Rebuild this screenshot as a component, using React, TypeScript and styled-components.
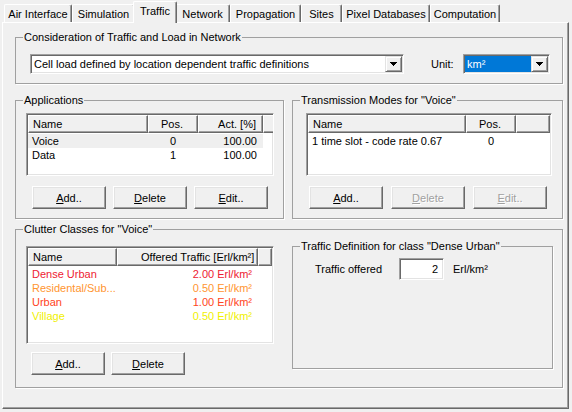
import * as React from 'react';
import styled, { createGlobalStyle } from 'styled-components';

const GlobalStyle = createGlobalStyle`
  html, body {
    margin: 0;
    padding: 0;
    background: #f0f0f0;
  }
  body {
    font-family: "Liberation Sans", Arial, sans-serif;
    font-size: 11px;
    color: #000;
  }
`;

const Window = styled.div`
  width: 572px;
  height: 412px;
  overflow: hidden;
  background: #f0f0f0;
`;

const TabStrip = styled.div`
  display: flex;
  align-items: flex-end;
  box-sizing: border-box;
  height: 22px;
  padding-left: 4px;
`;

const Tab = styled.div<{ $active?: boolean; $w: number }>`
  position: relative;
  z-index: ${(p) => (p.$active ? 2 : 1)};
  box-sizing: border-box;
  width: ${(p) => p.$w + (p.$active ? 4 : 0)}px;
  height: ${(p) => (p.$active ? 22 : 18)}px;
  margin: 0 ${(p) => (p.$active ? -2 : 0)}px ${(p) => (p.$active ? -1 : 0)}px;
  padding-bottom: ${(p) => (p.$active ? 3 : 0)}px;
  display: flex;
  align-items: center;
  justify-content: center;
  white-space: nowrap;
  background: #f0f0f0;
  border-top: 1px solid #fff;
  border-left: 1px solid #fff;
  border-right: 1px solid #696969;
  border-radius: 2px 2px 0 0;
  box-shadow: inset -1px 0 0 #a0a0a0;
`;

const Panel = styled.div`
  box-sizing: border-box;
  width: 567px;
  height: 387px;
  margin-left: 2px;
  padding: 8px 0 0 12px;
  display: flex;
  flex-direction: column;
  border-top: 1px solid #fff;
  border-left: 1px solid #fff;
  border-right: 1px solid #696969;
  border-bottom: 1px solid #696969;
  box-shadow: inset -1px -1px 0 #a0a0a0;
`;

const Group = styled.fieldset<{ $w: number; $h: number }>`
  box-sizing: border-box;
  width: ${(p) => p.$w}px;
  height: ${(p) => p.$h}px;
  min-width: 0;
  margin: 0;
  padding: 0;
  border: 1px solid #a0a0a0;
  box-shadow: 1px 1px 0 #fff;
`;

const Legend = styled.legend`
  margin-left: 7px;
  padding: 0 1px;
  line-height: 13px;
  white-space: nowrap;
`;

const LoadRow = styled.div`
  display: flex;
  align-items: center;
  margin-top: 10px;
  padding-left: 14px;
`;

const UnitLabel = styled.span`
  width: 32px;
  margin-left: 27px;
`;

const Sunken = styled.div`
  box-sizing: border-box;
  background: #fff;
  border-top: 1px solid #a0a0a0;
  border-left: 1px solid #a0a0a0;
  border-right: 1px solid #fff;
  border-bottom: 1px solid #fff;
  box-shadow: inset 1px 1px 0 #696969, inset -1px -1px 0 #e3e3e3;
  padding: 1px;
`;

const Combo = styled(Sunken)<{ $w: number }>`
  width: ${(p) => p.$w}px;
  height: 20px;
  display: flex;
`;

const ComboText = styled.div<{ $selected?: boolean }>`
  flex: 1;
  min-width: 0;
  padding-left: 2px;
  line-height: 16px;
  white-space: nowrap;
  overflow: hidden;
  background: ${(p) => (p.$selected ? '#0078d7' : 'transparent')};
  color: ${(p) => (p.$selected ? '#fff' : '#000')};
`;

const DropButton = styled.div`
  box-sizing: border-box;
  width: 17px;
  height: 16px;
  display: flex;
  align-items: center;
  justify-content: center;
  background: #f0f0f0;
  border-top: 1px solid #e3e3e3;
  border-left: 1px solid #e3e3e3;
  border-right: 1px solid #696969;
  border-bottom: 1px solid #696969;
  box-shadow: inset 1px 1px 0 #fff, inset -1px -1px 0 #a0a0a0;
`;

const MiddleRow = styled.div`
  display: flex;
  gap: 8px;
  margin-top: 10px;
`;

const ListFrame = styled(Sunken)<{ $w: number; $h: number }>`
  width: ${(p) => p.$w}px;
  height: ${(p) => p.$h}px;
  overflow: hidden;
`;

const ListHeader = styled.div<{ $cols: string }>`
  display: grid;
  grid-template-columns: ${(p) => p.$cols} 1fr;
  height: 18px;
`;

const HeadCell = styled.div<{ $align: string; $pad?: number }>`
  box-sizing: border-box;
  height: 18px;
  line-height: 16px;
  padding: 0 6px 0 ${(p) => (p.$pad !== undefined ? p.$pad : 4)}px;
  text-align: ${(p) => p.$align};
  white-space: nowrap;
  overflow: hidden;
  background: #f0f0f0;
  border-top: 1px solid #fff;
  border-left: 1px solid #fff;
  border-right: 1px solid #696969;
  border-bottom: 1px solid #696969;
  box-shadow: inset -1px -1px 0 #a0a0a0;
`;

const ListBody = styled.div`
  padding-top: 1px;
`;

const ListRow = styled.div<{ $cols: string; $hl?: boolean; $color?: string }>`
  display: grid;
  grid-template-columns: ${(p) => p.$cols};
  width: max-content;
  height: 14px;
  line-height: 14px;
  background: ${(p) => (p.$hl ? '#efefef' : 'transparent')};
  color: ${(p) => p.$color || '#000'};
`;

const Cell = styled.div<{ $align: string }>`
  padding: ${(p) =>
    p.$align === 'left' ? '0 0 0 4px' : p.$align === 'right' ? '0 6px 0 0' : '0'};
  text-align: ${(p) => p.$align};
  white-space: nowrap;
  overflow: hidden;
`;

const ListArea = styled.div<{ $left: number }>`
  margin: 6px 0 0 ${(p) => p.$left}px;
`;

const ButtonRow = styled.div<{ $top: number; $left: number; $gap: number }>`
  display: flex;
  gap: ${(p) => p.$gap}px;
  margin: ${(p) => p.$top}px 0 0 ${(p) => p.$left}px;
`;

const Button = styled.button`
  box-sizing: border-box;
  width: 74px;
  height: 23px;
  padding: 0;
  font: inherit;
  color: #000;
  background: #f0f0f0;
  border-style: solid;
  border-width: 1px;
  border-color: #fff #696969 #696969 #fff;
  box-shadow: inset -1px -1px 0 #a0a0a0, inset 1px 1px 0 #e3e3e3;

  &:disabled {
    color: #a0a0a0;
    text-shadow: 1px 1px 0 #fff;
  }
`;

const ClutterBody = styled.div`
  display: flex;
  align-items: flex-start;
  margin-top: 4px;
`;

const ClutterList = styled.div`
  margin: 6px 0 0 10px;
`;

const DefGroup = styled(Group)`
  margin-left: 18px;
`;

const DefRow = styled.div`
  display: flex;
  align-items: center;
  margin-top: 5px;
  padding-left: 22px;
`;

const DefLabel = styled.span`
  width: 84px;
`;

const NumberBox = styled(Sunken)`
  width: 45px;
  height: 22px;
  padding-right: 5px;
  line-height: 18px;
  text-align: right;
`;

const UnitText = styled.span`
  margin-left: 9px;
`;

type Col = { title: string; w: number; align: 'left' | 'center' | 'right'; headAlign?: string; headPad?: number };
type Row = { cells: string[]; hl?: boolean; color?: string };

const Arrow = () => (
  <svg width="7" height="4" viewBox="0 0 7 4" shapeRendering="crispEdges">
    <polygon points="0,0 7,0 3.5,4" fill="#000" />
  </svg>
);

const ListTable = ({ cols, rows, w, h }: { cols: Col[]; rows: Row[]; w: number; h: number }) => {
  const template = cols.map((c) => `${c.w}px`).join(' ');
  return (
    <ListFrame $w={w} $h={h}>
      <ListHeader $cols={template}>
        {cols.map((c) => (
          <HeadCell key={c.title} $align={c.headAlign || c.align} $pad={c.headPad}>
            {c.title}
          </HeadCell>
        ))}
        <HeadCell $align="left" />
      </ListHeader>
      <ListBody>
        {rows.map((r, i) => (
          <ListRow key={i} $cols={template} $hl={r.hl} $color={r.color}>
            {r.cells.map((c, j) => (
              <Cell key={j} $align={cols[j].align}>
                {c}
              </Cell>
            ))}
          </ListRow>
        ))}
      </ListBody>
    </ListFrame>
  );
};

const tabs = [
  { label: 'Air Interface', w: 68 },
  { label: 'Simulation', w: 63 },
  { label: 'Traffic', w: 40, active: true },
  { label: 'Network', w: 55 },
  { label: 'Propagation', w: 71 },
  { label: 'Sites', w: 41 },
  { label: 'Pixel Databases', w: 88 },
  { label: 'Computation', w: 70 },
];

const appCols: Col[] = [
  { title: 'Name', w: 120, align: 'left' },
  { title: 'Pos.', w: 50, align: 'center' },
  { title: 'Act. [%]', w: 65, align: 'right' },
];

const appRows: Row[] = [
  { cells: ['Voice', '0', '100.00'], hl: true },
  { cells: ['Data', '1', '100.00'] },
];

const modeCols: Col[] = [
  { title: 'Name', w: 158, align: 'left' },
  { title: 'Pos.', w: 50, align: 'center' },
];

const modeRows: Row[] = [{ cells: ['1 time slot - code rate 0.67', '0'] }];

const clutterCols: Col[] = [
  { title: 'Name', w: 89, align: 'left' },
  { title: 'Offered Traffic [Erl/km²]', w: 141, align: 'right', headAlign: 'left', headPad: 23 },
];

const clutterRows: Row[] = [
  { cells: ['Dense Urban', '2.00 Erl/km²'], color: '#ee1a32' },
  { cells: ['Residental/Sub...', '0.50 Erl/km²'], color: '#ff9530' },
  { cells: ['Urban', '1.00 Erl/km²'], color: '#ff4422' },
  { cells: ['Village', '0.50 Erl/km²'], color: '#f0f000' },
];

export default function App() {
  return (
    <Window>
      <GlobalStyle />
      <TabStrip>
        {tabs.map((t) => (
          <Tab key={t.label} $w={t.w} $active={t.active}>
            {t.label}
          </Tab>
        ))}
      </TabStrip>
      <Panel>
        <Group $w={548} $h={53}>
          <Legend>Consideration of Traffic and Load in Network</Legend>
          <LoadRow>
            <Combo $w={374}>
              <ComboText>Cell load defined by location dependent traffic definitions</ComboText>
              <DropButton>
                <Arrow />
              </DropButton>
            </Combo>
            <UnitLabel>Unit:</UnitLabel>
            <Combo $w={87}>
              <ComboText $selected>km²</ComboText>
              <DropButton>
                <Arrow />
              </DropButton>
            </Combo>
          </LoadRow>
        </Group>

        <MiddleRow>
          <Group $w={269} $h={125}>
            <Legend>Applications</Legend>
            <ListArea $left={10}>
              <ListTable cols={appCols} rows={appRows} w={248} h={63} />
            </ListArea>
            <ButtonRow $top={10} $left={16} $gap={7}>
              <Button>
                <u>A</u>dd..
              </Button>
              <Button>
                <u>D</u>elete
              </Button>
              <Button>
                <u>E</u>dit..
              </Button>
            </ButtonRow>
          </Group>
          <Group $w={271} $h={125}>
            <Legend>Transmission Modes for "Voice"</Legend>
            <ListArea $left={13}>
              <ListTable cols={modeCols} rows={modeRows} w={246} h={63} />
            </ListArea>
            <ButtonRow $top={10} $left={16} $gap={8}>
              <Button>
                <u>A</u>dd..
              </Button>
              <Button disabled>
                <u>D</u>elete
              </Button>
              <Button disabled>
                <u>E</u>dit..
              </Button>
            </ButtonRow>
          </Group>
        </MiddleRow>

        <Group $w={548} $h={165} style={{ marginTop: 4 }}>
          <Legend>Clutter Classes for "Voice"</Legend>
          <ClutterBody>
            <ClutterList>
              <ListTable cols={clutterCols} rows={clutterRows} w={248} h={98} />
              <ButtonRow $top={8} $left={5} $gap={6}>
                <Button>
                  <u>A</u>dd..
                </Button>
                <Button>
                  <u>D</u>elete
                </Button>
              </ButtonRow>
            </ClutterList>
            <DefGroup $w={261} $h={129}>
              <Legend>Traffic Definition for class "Dense Urban"</Legend>
              <DefRow>
                <DefLabel>Traffic offered</DefLabel>
                <NumberBox>2</NumberBox>
                <UnitText>Erl/km²</UnitText>
              </DefRow>
            </DefGroup>
          </ClutterBody>
        </Group>
      </Panel>
    </Window>
  );
}
